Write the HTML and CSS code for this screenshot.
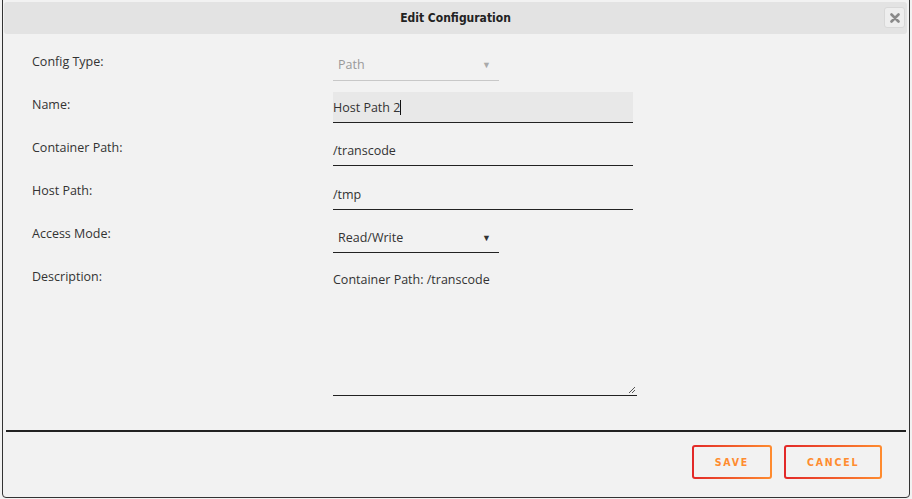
FILE: index.html
```html
<!DOCTYPE html>
<html>
<head>
  <link rel="stylesheet" href="styles.css">
</head>
<body>
  <div class="dialog">
    <div class="dialog-title">
      <span>Edit Configuration</span>
      <button class="close-btn" title="Close">
        <svg width="10" height="10" viewBox="0 0 10 10"><path d="M1.5 1.5 L8.5 8.5 M8.5 1.5 L1.5 8.5" stroke="#8a8a8a" stroke-width="2.6" stroke-linecap="round"/></svg>
      </button>
    </div>

    <div class="dialog-body">
      <div class="row">
        <label>Config Type:</label>
        <div class="select disabled"><span>Path</span><span class="caret">&#9660;</span></div>
      </div>
      <div class="row">
        <label>Name:</label>
        <div class="field active">Host Path 2<span class="cursor"></span></div>
      </div>
      <div class="row">
        <label>Container Path:</label>
        <div class="field">/transcode</div>
      </div>
      <div class="row">
        <label>Host Path:</label>
        <div class="field host">/tmp</div>
      </div>
      <div class="row">
        <label>Access Mode:</label>
        <div class="select"><span>Read/Write</span><span class="caret">&#9660;</span></div>
      </div>
      <div class="row">
        <label>Description:</label>
        <div class="textarea">Container Path: /transcode
          <svg class="grip" width="9" height="9" viewBox="0 0 9 9"><path d="M8 2 L2 8 M8 5 L5 8" stroke="#555" stroke-width="1"/></svg>
        </div>
      </div>
    </div>

    <div class="dialog-footer">
      <button class="btn save">SAVE</button>
      <button class="btn cancel">CANCEL</button>
    </div>
  </div>
</body>
</html>
```

FILE: styles.css
```css
body {
  margin: 0;
  padding: 0;
  background-color: #f2f2f2;
  font-family: "Open Sans", "Noto Sans", sans-serif;
  color: #333;
}

.dialog {
  box-sizing: border-box;
  height: 502px;
  margin: -4px 2px 0 2px;
  padding-top: 4px;
  border: 1px solid #333;
  border-radius: 4px;
  background-color: #f2f2f2;
  display: flex;
  flex-direction: column;
}

.dialog-title {
  margin: 1px 2px 0 1px;
  height: 32px;
  background-color: #e3e3e3;
  border-radius: 3px;
  display: flex;
  align-items: center;
  justify-content: center;
  position: relative;
  font-family: "DejaVu Sans Condensed", "DejaVu Sans", sans-serif;
  font-weight: bold;
  font-size: 12px;
  color: #222;
}

.close-btn {
  position: absolute;
  right: 2px;
  top: 5px;
  width: 21px;
  height: 21px;
  border: 1px solid #d8d8d8;
  border-radius: 3px;
  background-color: #eeeeee;
  padding: 0;
  display: flex;
  align-items: center;
  justify-content: center;
}

.dialog-body {
  flex: 1;
  padding: 13px 0 0 29px;
}

.row {
  display: grid;
  grid-template-columns: 301px auto;
  align-items: start;
  min-height: 43px;
  font-size: 12.5px;
}

.row label {
  padding-top: 6px;
  color: #333;
}

.select {
  box-sizing: border-box;
  width: 166px;
  height: 31px;
  padding: 0 8px 0 5px;
  margin-top: 3px;
  display: flex;
  align-items: center;
  justify-content: space-between;
  border-bottom: 1px solid #222;
}

.select.disabled {
  height: 33px;
  margin-top: 1px;
  color: #999;
  border-bottom-color: #c8c8c8;
}

.caret {
  font-size: 9px;
}

.select.disabled .caret {
  color: #aaa;
}

.field {
  box-sizing: border-box;
  width: 300px;
  height: 31px;
  padding: 0;
  margin-top: 2px;
  display: flex;
  align-items: center;
  border-bottom: 1px solid #222;
}

.field.host {
  margin-top: 3px;
}

.field.active {
  background-color: #e8e8e8;
}

.cursor {
  display: inline-block;
  width: 1px;
  height: 15px;
  background-color: #111;
}

.textarea {
  box-sizing: border-box;
  width: 304px;
  height: 132px;
  padding: 7px 0;
  margin-top: 2px;
  border-bottom: 1px solid #222;
  position: relative;
}

.grip {
  position: absolute;
  right: 1px;
  bottom: 1px;
}

.dialog-footer {
  margin: 0 3px;
  border-top: 2px solid #222;
  height: 67px;
  display: flex;
  justify-content: flex-end;
  align-items: flex-start;
  gap: 12px;
  padding: 13px 24px 0 0;
  box-sizing: border-box;
}

.btn {
  height: 34px;
  padding: 0 21px;
  border: 2px solid transparent;
  border-radius: 3px;
  background:
    linear-gradient(#f2f2f2, #f2f2f2) padding-box,
    linear-gradient(90deg, #e22828, #ff8c2f) border-box;
  color: #ff8c2f;
  font-family: "DejaVu Sans Condensed", "DejaVu Sans", sans-serif;
  font-weight: bold;
  font-size: 10.5px;
  letter-spacing: 1.8px;
}

.btn.cancel {
  width: 98px;
}
```
